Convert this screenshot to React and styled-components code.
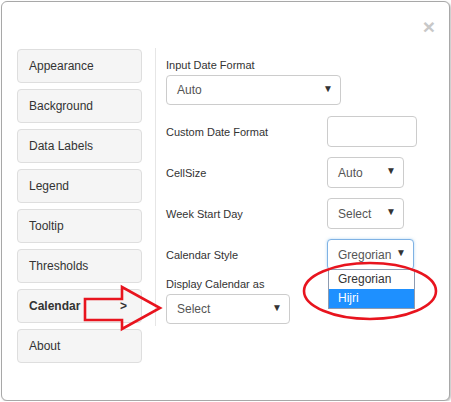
import React from "react";
import styled, { createGlobalStyle } from "styled-components";

const Global = createGlobalStyle`
  html, body { margin: 0; padding: 0; background: #fff; }
  body { font-family: "Liberation Sans", Arial, sans-serif; color: #333; }
  #root { padding: 1px 1px 0 1px; }
`;

const Modal = styled.div`
  position: relative;
  width: 447px;
  height: 398px;
  border: 1px solid #a8a8a8;
  border-radius: 6px;
  background: #fff;
  box-shadow: 1px 1px 2px rgba(0,0,0,0.25);
  box-sizing: content-box;
`;

const Header = styled.div`
  height: 46px;
  display: flex;
  justify-content: flex-end;
  align-items: flex-start;
  padding-right: 14px;
`;

const Close = styled.span`
  font-size: 21px;
  font-weight: bold;
  line-height: 1;
  color: #c8c8c8;
  margin-top: 14px;
`;

const Body = styled.div`
  display: flex;
  align-items: flex-start;
  padding-left: 15px;
`;

const Nav = styled.div`
  width: 125px;
  margin-top: 1px;
  display: flex;
  flex-direction: column;
  gap: 6px;
  margin-right: 13px;
`;

const NavItem = styled.div`
  height: 34px;
  box-sizing: border-box;
  border: 1px solid #dedede;
  border-radius: 4px;
  background: #f5f5f5;
  display: flex;
  align-items: center;
  justify-content: space-between;
  padding: 0 14px 0 11px;
  font-size: 12px;
  font-weight: ${(p) => (p.$active ? "bold" : "normal")};
  color: #333;
`;

const Panel = styled.div`
  border-left: 1px solid #e6e6e6;
  padding: 9px 0 2px 10px;
  width: 260px;
`;

const Label = styled.div`
  font-size: 11px;
  line-height: 16px;
  color: #333;
  margin-bottom: 2px;
`;

const Row = styled.div`
  display: flex;
  align-items: center;
  height: 31px;
  margin-top: ${(p) => p.$mt || 10}px;
`;

const RowLabel = styled.div`
  width: 161px;
  font-size: 11px;
  color: #333;
`;

const Block = styled.div`
  margin-top: ${(p) => p.$mt || 0}px;
`;

const Select = styled.div`
  position: relative;
  width: ${(p) => p.$w}px;
  height: ${(p) => p.$h || 30}px;
  box-sizing: border-box;
  border: 1px solid ${(p) => (p.$focus ? "#7fb2e4" : "#ccc")};
  border-radius: 4px;
  background: #fff;
  display: flex;
  align-items: center;
  justify-content: space-between;
  padding: 0 7px 0 10px;
  font-size: 12px;
  color: #555;
  box-shadow: ${(p) => (p.$focus ? "0 0 3px rgba(102,175,233,0.5)" : "none")};
`;

const Caret = styled.span`
  font-size: 10px;
  color: #333;
  margin-top: -4px;
`;

const TextInput = styled.div`
  width: 90px;
  height: 31px;
  box-sizing: border-box;
  border: 1px solid #ccc;
  border-radius: 4px;
  background: #fff;
`;

const List = styled.div`
  position: absolute;
  top: 29px;
  left: 0;
  width: 87px;
  box-sizing: border-box;
  border: 1px solid #8e9bb0;
  background: #fff;
  z-index: 2;
`;

const Option = styled.div`
  height: 19px;
  line-height: 19px;
  padding-left: 9px;
  font-size: 12px;
  color: ${(p) => (p.$sel ? "#fff" : "#333")};
  background: ${(p) => (p.$sel ? "#1e90ff" : "#fff")};
`;

const Overlay = styled.svg`
  position: absolute;
  left: -2px;
  top: -2px;
  pointer-events: none;
  z-index: 3;
`;

export default function App() {
  const nav = ["Appearance", "Background", "Data Labels", "Legend", "Tooltip", "Thresholds", "Calendar", "About"];
  return (
    <>
      <Global />
      <Modal>
        <Header>
          <Close>×</Close>
        </Header>
        <Body>
          <Nav>
            {nav.map((n) => (
              <NavItem key={n} $active={n === "Calendar"}>
                <span>{n}</span>
                {n === "Calendar" && <span>&gt;</span>}
              </NavItem>
            ))}
          </Nav>
          <Panel>
            <Label>Input Date Format</Label>
            <Select $w={175}>
              <span>Auto</span>
              <Caret>▼</Caret>
            </Select>
            <Row $mt={11}>
              <RowLabel>Custom Date Format</RowLabel>
              <TextInput />
            </Row>
            <Row>
              <RowLabel>CellSize</RowLabel>
              <Select $w={77} $h={31}>
                <span>Auto</span>
                <Caret>▼</Caret>
              </Select>
            </Row>
            <Row>
              <RowLabel>Week Start Day</RowLabel>
              <Select $w={77} $h={31}>
                <span>Select</span>
                <Caret>▼</Caret>
              </Select>
            </Row>
            <Row>
              <RowLabel>Calendar Style</RowLabel>
              <Select $w={87} $h={31} $focus>
                <span>Gregorian</span>
                <Caret>▼</Caret>
                <List>
                  <Option>Gregorian</Option>
                  <Option $sel>Hijri</Option>
                </List>
              </Select>
            </Row>
            <Block $mt={6}>
              <Label>Display Calendar as</Label>
              <Select $w={124}>
                <span>Select</span>
                <Caret>▼</Caret>
              </Select>
            </Block>
          </Panel>
        </Body>
        <Overlay width="451" height="402" viewBox="0 0 451 402">
          <polygon
            points="85,299 122,299 122,287 160,308 122,329 122,320 85,320"
            fill="none"
            stroke="#e8141e"
            strokeWidth="2.6"
          />
          <ellipse cx="370" cy="291" rx="66" ry="28" fill="none" stroke="#e8141e" strokeWidth="2.6" />
        </Overlay>
      </Modal>
    </>
  );
}
